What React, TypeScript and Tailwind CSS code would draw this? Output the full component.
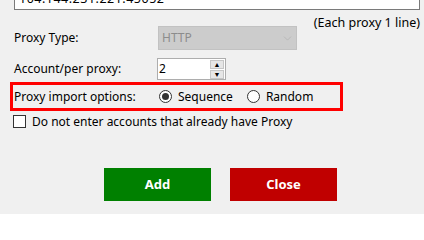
import { ChevronDown } from 'lucide-react'

const font = { fontFamily: '"Noto Sans", "Liberation Sans", sans-serif' }

function Radio({ checked, label }: { checked?: boolean; label: string }) {
  return (
    <label className="flex items-center gap-[6px]">
      <span className="flex h-[13px] w-[13px] items-center justify-center rounded-full border border-[#333] bg-white">
        {checked && <span className="h-[7px] w-[7px] rounded-full bg-[#333]" />}
      </span>
      <span>{label}</span>
    </label>
  )
}

export default function App() {
  return (
    <div
      className="h-[214px] w-[424px] overflow-hidden bg-[#f0f0f0] text-[12px] leading-none text-black"
      style={font}
    >
      {/* proxy list textarea, scrolled so only the bottom edge shows */}
      <div className="-mt-[20px] ml-[14px] flex h-[30px] w-[406px] items-end border border-[#7a7a7a] bg-white pb-[4px] pl-[4px] text-[12.5px]">
        <span className="tracking-[0.5px]">104.144.231.221:45052</span>
      </div>

      <div className="mt-[7px] flex h-[14px] justify-end pr-[4px] text-[12.5px]">(Each proxy 1 line)</div>

      <div className="mt-[-5px] flex h-[24px] items-center">
        <span className="w-[158px] pl-[14px]">Proxy Type:</span>
        <div className="flex h-[24px] w-[139px] items-center justify-between border border-[#c2c2c2] bg-[#cccccc] pl-[3px] pr-[2px] text-[#8c8c8c]">
          <span>HTTP</span>
          <ChevronDown size={13} strokeWidth={1} className="text-[#a8a8a8]" />
        </div>
      </div>

      <div className="mt-[8px] flex h-[22px] items-center">
        <span className="w-[157px] pl-[14px]">Account/per proxy:</span>
        <div className="flex h-[22px] w-[69px] border border-[#adadad] bg-white">
          <span className="flex flex-1 items-center pl-[1px]">2</span>
          <div className="my-[1px] mr-[1px] flex w-[14px] flex-col gap-[1px]">
            <span className="flex flex-1 items-center justify-center border border-[#c6c6c6] bg-[#e6e6e6] text-[7px]">▲</span>
            <span className="flex flex-1 items-center justify-center border border-[#c6c6c6] bg-[#e6e6e6] text-[7px]">▼</span>
          </div>
        </div>
      </div>

      <div className="ml-[10px] mt-[2px] flex h-[29px] w-[333px] items-center border-[3px] border-[#ff0000]">
        <span className="w-[146px] pl-[1px]">Proxy import options:</span>
        <div className="flex items-center gap-[14px]">
          <Radio checked label="Sequence" />
          <Radio label="Random" />
        </div>
      </div>

      <label className="ml-[13px] mt-[4px] flex h-[13px] items-center gap-[6px]">
        <span className="h-[13px] w-[13px] border border-[#333] bg-white" />
        <span>Do not enter accounts that already have Proxy</span>
      </label>

      <div className="mt-[40px] flex gap-[19px] pl-[104px]">
        <button className="h-[33px] w-[107px] bg-[#008000] text-[13px] font-bold text-white">Add</button>
        <button className="h-[33px] w-[107px] bg-[#c00000] text-[13px] font-bold text-white">Close</button>
      </div>
    </div>
  )
}
